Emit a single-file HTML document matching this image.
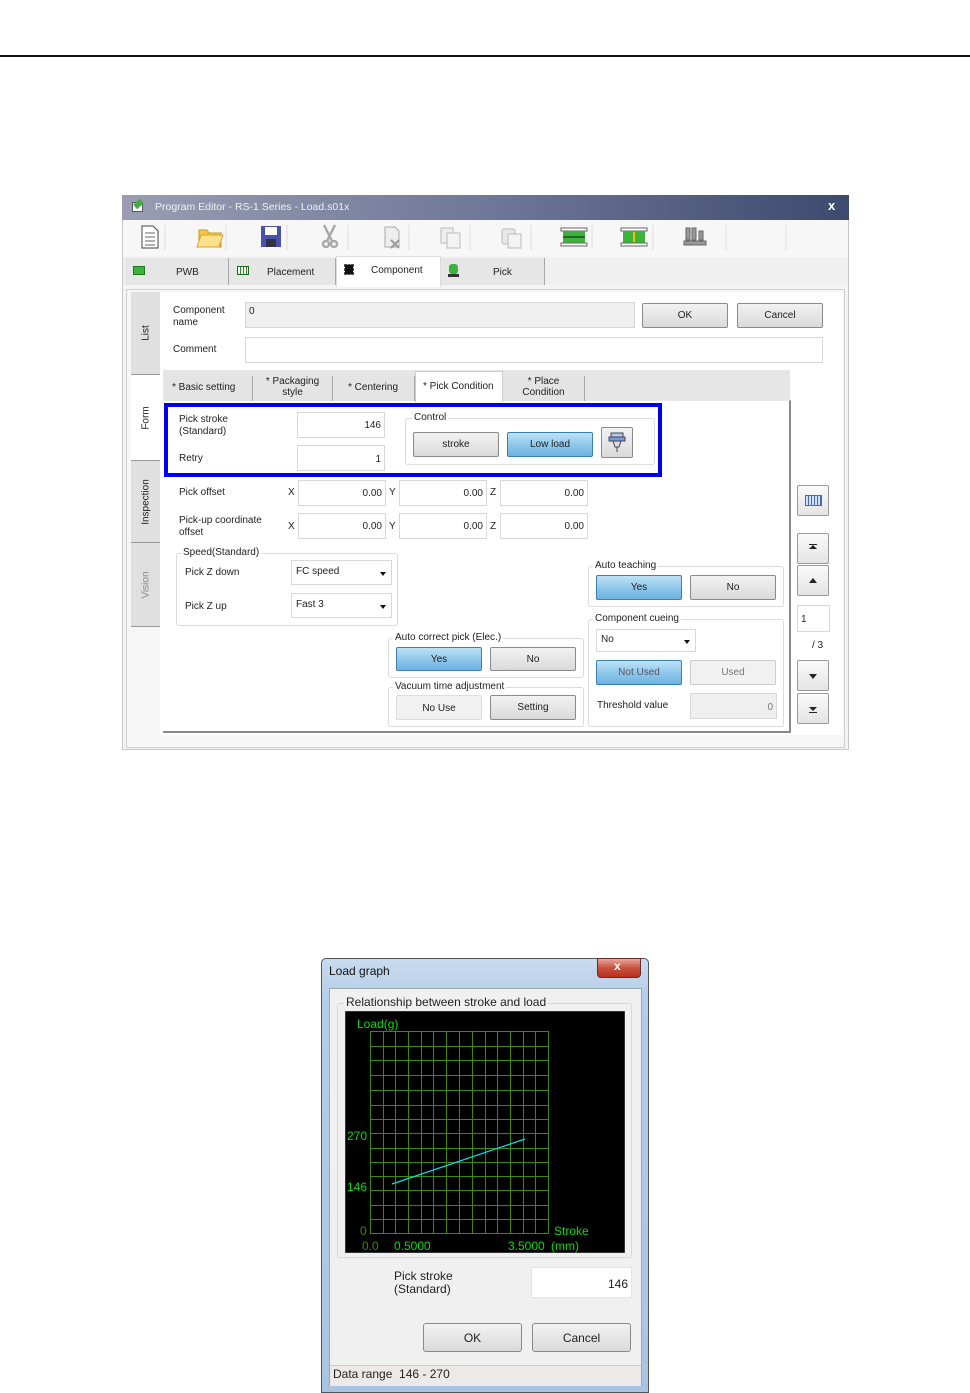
<!DOCTYPE html>
<html><head><meta charset="utf-8"><style>
*{margin:0;padding:0;box-sizing:border-box}
body{width:970px;height:1393px;background:#fff;position:relative;font-family:"Liberation Sans","DejaVu Sans",sans-serif;font-size:10px;color:#222;overflow:hidden}
.a{position:absolute}
.t{position:absolute;white-space:nowrap;line-height:1.15}
.inp{position:absolute;background:#fff;border:1px solid #d8d8d8;text-align:right;padding:0 3px;font-size:10px}
.btn{position:absolute;border:1px solid #8a8a8a;border-radius:2px;background:linear-gradient(#f2f2f2,#dadada);text-align:center;font-size:10px}
.bl{background:linear-gradient(#bfe2f8,#8cc6ea 55%,#6eb4e2);border-color:#3c7fb1}
.grp{position:absolute;border:1px solid #dcdcdc;border-radius:3px}
.gl{position:absolute;background:#fff;padding:0 2px;top:-7px;left:6px;font-size:10px;white-space:nowrap}
.sel{position:absolute;background:#fff;border:1px solid #d8d8d8;padding:0 4px;font-size:10px}
.sel:after{content:"";position:absolute;right:5px;top:50%;margin-top:-1px;border:3px solid transparent;border-top:4px solid #111}
.tab{position:absolute;background:#e4e4e4;border-right:1px solid #a8a8a8;font-size:10px;text-align:center;line-height:1.1}
.vt{position:absolute;background:#e0e0e0;border-bottom:1px solid #9a9a9a;font-size:10px}
.vt span{position:absolute;left:50%;top:50%;transform:translate(-50%,-50%) rotate(-90deg);white-space:nowrap}
.rb{position:absolute;width:32px;height:31px;border:1px solid #9a9a9a;border-radius:2px;background:linear-gradient(#fafafa,#e4e4e4)}
</style></head><body>
<div class="a" style="left:0;top:55px;width:970px;height:2px;background:#111"></div>

<!-- main window -->
<div class="a" style="left:122px;top:195px;width:727px;height:555px;background:#f4f4f4;border:1px solid #c8c8c8"></div>
<div class="a" style="left:122px;top:195px;width:727px;height:25px;background:linear-gradient(90deg,#9a9db2,#6f7898 50%,#3d4a6e)"></div>
<div class="a" style="left:132px;top:202px;width:11px;height:10px;border:1px solid #555;background:#fff"></div>
<div class="a" style="left:134px;top:201px;width:9px;height:6px;background:#4a4;transform:rotate(-40deg)"></div>
<div class="t" style="left:155px;top:201px;color:#f0f0f0;font-size:10.5px">Program Editor - RS-1 Series - Load.s01x</div>
<div class="t" style="left:828px;top:199px;color:#fff;font-weight:bold;font-size:13px">x</div>

<!-- toolbar -->
<div class="a" style="left:123px;top:220px;width:725px;height:37px;background:#f7f7f7"></div>
<svg class="a" style="left:123px;top:220px" width="725" height="40">
<g stroke="#ddd"><line x1="42" y1="5" x2="42" y2="30"/><line x1="103" y1="5" x2="103" y2="30"/><line x1="164" y1="5" x2="164" y2="30"/><line x1="225" y1="5" x2="225" y2="30"/><line x1="286" y1="5" x2="286" y2="30"/><line x1="347" y1="5" x2="347" y2="30"/><line x1="408" y1="5" x2="408" y2="30"/><line x1="469" y1="5" x2="469" y2="30"/><line x1="530" y1="5" x2="530" y2="30"/><line x1="603" y1="5" x2="603" y2="30"/><line x1="663" y1="5" x2="663" y2="30"/></g>
<path d="M19 6h11l5 5v17H19z" fill="#fff" stroke="#444"/><g stroke="#666"><line x1="22" y1="13" x2="32" y2="13"/><line x1="22" y1="17" x2="32" y2="17"/><line x1="22" y1="21" x2="32" y2="21"/><line x1="22" y1="25" x2="32" y2="25"/></g>
<path d="M76 10h8l2 3h12v14H76z" fill="#f3c64a" stroke="#c99a1c"/><path d="M78 15h22l-4 12H74z" fill="#fde08a" stroke="#d4a22a"/>
<rect x="138" y="6" width="20" height="21" fill="#4a52b0"/><rect x="142" y="7" width="12" height="8" fill="#fff"/><rect x="143" y="19" width="10" height="8" fill="#334"/>
<g stroke="#aaa" stroke-width="2.5" fill="none"><path d="M201 5l8 16M212 5l-8 16"/><circle cx="203" cy="24" r="3"/><circle cx="211" cy="24" r="3"/></g>
<path d="M262 7h10l4 4v16h-14z" fill="#eee" stroke="#aaa"/><path d="M268 20l8 8M276 20l-8 8" stroke="#999" stroke-width="2"/>
<rect x="318" y="8" width="12" height="15" fill="#eee" stroke="#bbb"/><rect x="324" y="13" width="13" height="15" fill="#f3f3f3" stroke="#bbb"/>
<rect x="379" y="9" width="13" height="15" rx="2" fill="#e8e8e8" stroke="#bbb"/><rect x="385" y="14" width="13" height="14" fill="#f3f3f3" stroke="#bbb"/>
<rect x="438" y="8" width="26" height="3" fill="#fff" stroke="#666"/><rect x="440" y="11" width="22" height="12" fill="#3cb43c"/><rect x="438" y="23" width="26" height="3" fill="#fff" stroke="#666"/><path d="M440 17h22" stroke="#111"/>
<rect x="498" y="8" width="26" height="3" fill="#fff" stroke="#666"/><rect x="500" y="11" width="22" height="12" fill="#3cb43c"/><rect x="498" y="23" width="26" height="3" fill="#fff" stroke="#666"/><path d="M511 12v10" stroke="#f5c000" stroke-width="2"/>
<g fill="#999" stroke="#666"><rect x="563" y="8" width="4" height="12"/><rect x="569" y="8" width="4" height="12"/><rect x="576" y="11" width="4" height="9"/><rect x="561" y="21" width="22" height="4"/></g>
</svg>

<!-- main tabs -->
<div class="a" style="left:123px;top:257px;width:725px;height:28px;background:#f0f0f0"></div>
<div class="tab" style="left:125px;top:258px;width:104px;height:27px;background:#e6e6e6"><div class="a" style="left:8px;top:8px;width:12px;height:9px;background:#3cb43c;border:1px solid #1a7a1a"></div><div class="t" style="left:51px;top:9px">PWB</div></div>
<div class="tab" style="left:229px;top:258px;width:107px;height:27px;background:#e6e6e6"><div class="a" style="left:8px;top:8px;width:12px;height:9px;border:1px solid #1a6a1a;background:repeating-linear-gradient(90deg,#fff 0 2px,#2a8a2a 2px 3px)"></div><div class="t" style="left:38px;top:9px">Placement</div></div>
<div class="a" style="left:336px;top:256px;width:105px;height:31px;background:#fff;border:1px solid #ddd;border-bottom:none"><div class="a" style="left:8px;top:8px;width:8px;height:9px;background:#111;outline:1px dashed #555"></div><div class="t" style="left:34px;top:8px">Component</div></div>
<div class="tab" style="left:441px;top:258px;width:104px;height:27px;background:#e6e6e6"><div class="a" style="left:8px;top:6px;width:9px;height:10px;background:#3cb43c;border-radius:3px"></div><div class="a" style="left:7px;top:16px;width:11px;height:3px;background:#333"></div><div class="t" style="left:52px;top:9px">Pick</div></div>

<!-- content -->
<div class="a" style="left:126px;top:289px;width:719px;height:459px;border:1px solid #d0d0d0;background:#f6f6f6"></div>
<div class="vt" style="left:131px;top:292px;width:29px;height:83px"><span>List</span></div>
<div class="a" style="left:131px;top:375px;width:30px;height:85px;background:#fff"><span class="t" style="left:50%;top:50%;transform:translate(-50%,-50%) rotate(-90deg)">Form</span></div>
<div class="vt" style="left:131px;top:460px;width:29px;height:83px;border-top:1px solid #9a9a9a"><span>Inspection</span></div>
<div class="vt" style="left:131px;top:543px;width:29px;height:84px;color:#888"><span>Vision</span></div>
<div class="a" style="left:160px;top:292px;width:683px;height:443px;background:#fff"></div>
<div class="a" style="left:163px;top:731px;width:628px;height:2px;background:#8a8a8a"></div>
<div class="a" style="left:789px;top:400px;width:2px;height:333px;background:#8a8a8a"></div>

<div class="t" style="left:173px;top:305px">Component<br>name</div>
<div class="inp" style="left:245px;top:302px;width:390px;height:26px;background:#efefef;text-align:left;padding-top:3px">0</div>
<div class="btn" style="left:642px;top:303px;width:86px;height:25px;line-height:23px">OK</div>
<div class="btn" style="left:737px;top:303px;width:86px;height:25px;line-height:23px">Cancel</div>
<div class="t" style="left:173px;top:344px">Comment</div>
<div class="inp" style="left:245px;top:337px;width:578px;height:26px"></div>

<!-- sub tabs -->
<div class="a" style="left:163px;top:370px;width:627px;height:31px;background:#e6e6e6"></div>
<div class="tab" style="left:166px;top:376px;width:87px;height:25px"><div class="t" style="left:6px;top:6px">* Basic setting</div></div>
<div class="tab" style="left:253px;top:376px;width:80px;height:25px;padding-top:0">* Packaging<br>style</div>
<div class="tab" style="left:333px;top:376px;width:82px;height:25px"><div class="t" style="left:15px;top:6px">* Centering</div></div>
<div class="a" style="left:415px;top:371px;width:88px;height:31px;background:#fff;border:1px solid #ccc;border-bottom:none"><div class="t" style="left:7px;top:9px">* Pick Condition</div></div>
<div class="tab" style="left:503px;top:376px;width:82px;height:25px">* Place<br>Condition</div>

<!-- blue box -->
<div class="a" style="left:164px;top:403px;width:498px;height:74px;border:4px solid #0000f0"></div>
<div class="t" style="left:179px;top:414px">Pick stroke<br>(Standard)</div>
<div class="inp" style="left:297px;top:412px;width:88px;height:26px;line-height:26px">146</div>
<div class="t" style="left:179px;top:453px">Retry</div>
<div class="inp" style="left:297px;top:445px;width:88px;height:26px;line-height:28px">1</div>
<div class="grp" style="left:405px;top:418px;width:250px;height:47px"><div class="gl">Control</div></div>
<div class="btn" style="left:413px;top:432px;width:86px;height:25px;line-height:24px">stroke</div>
<div class="btn bl" style="left:507px;top:432px;width:86px;height:25px;line-height:24px">Low load</div>
<div class="btn" style="left:601px;top:427px;width:32px;height:31px"><svg width="30" height="29"><rect x="9" y="5" width="12" height="4" fill="#b8c8e8" stroke="#445"/><rect x="7" y="9" width="16" height="4" fill="#7a9ad8" stroke="#445"/><path d="M11 13h8l-2 6h-4z" fill="#ddd" stroke="#445"/><path d="M15 19v5" stroke="#445"/></svg></div>

<div class="t" style="left:179px;top:487px">Pick offset</div>
<div class="t" style="left:179px;top:515px">Pick-up coordinate<br>offset</div>
<div class="t" style="left:288px;top:487px">X</div><div class="t" style="left:389px;top:487px">Y</div><div class="t" style="left:490px;top:487px">Z</div>
<div class="t" style="left:288px;top:521px">X</div><div class="t" style="left:389px;top:521px">Y</div><div class="t" style="left:490px;top:521px">Z</div>
<div class="inp" style="left:298px;top:480px;width:88px;height:26px;line-height:26px">0.00</div>
<div class="inp" style="left:399px;top:480px;width:88px;height:26px;line-height:26px">0.00</div>
<div class="inp" style="left:500px;top:480px;width:88px;height:26px;line-height:26px">0.00</div>
<div class="inp" style="left:298px;top:513px;width:88px;height:26px;line-height:26px">0.00</div>
<div class="inp" style="left:399px;top:513px;width:88px;height:26px;line-height:26px">0.00</div>
<div class="inp" style="left:500px;top:513px;width:88px;height:26px;line-height:26px">0.00</div>

<div class="grp" style="left:176px;top:553px;width:222px;height:73px"><div class="gl" style="left:4px">Speed(Standard)</div></div>
<div class="t" style="left:185px;top:567px">Pick Z down</div>
<div class="sel" style="left:291px;top:560px;width:101px;height:25px;line-height:22px">FC speed</div>
<div class="t" style="left:185px;top:601px">Pick Z up</div>
<div class="sel" style="left:291px;top:593px;width:101px;height:25px;line-height:22px">Fast 3</div>

<div class="grp" style="left:388px;top:638px;width:196px;height:40px"><div class="gl" style="left:4px">Auto correct pick (Elec.)</div></div>
<div class="btn bl" style="left:396px;top:647px;width:86px;height:24px;line-height:23px">Yes</div>
<div class="btn" style="left:490px;top:647px;width:86px;height:24px;line-height:23px">No</div>
<div class="grp" style="left:388px;top:687px;width:196px;height:40px"><div class="gl" style="left:4px">Vacuum time adjustment</div></div>
<div class="btn" style="left:396px;top:695px;width:86px;height:25px;line-height:25px;background:#f1f1f1;border-color:#ddd">No Use</div>
<div class="btn" style="left:490px;top:695px;width:86px;height:25px;line-height:23px">Setting</div>

<div class="grp" style="left:588px;top:566px;width:196px;height:41px"><div class="gl" style="left:4px">Auto teaching</div></div>
<div class="btn bl" style="left:596px;top:575px;width:86px;height:25px;line-height:24px">Yes</div>
<div class="btn" style="left:690px;top:575px;width:86px;height:25px;line-height:24px">No</div>
<div class="grp" style="left:588px;top:619px;width:196px;height:108px"><div class="gl" style="left:4px">Component cueing</div></div>
<div class="sel" style="left:596px;top:629px;width:100px;height:23px;line-height:20px">No</div>
<div class="btn bl" style="left:596px;top:660px;width:86px;height:25px;line-height:24px;color:#556">Not Used</div>
<div class="btn" style="left:690px;top:660px;width:86px;height:25px;line-height:24px;background:#f1f1f1;border-color:#ccc;color:#777">Used</div>
<div class="t" style="left:597px;top:700px">Threshold value</div>
<div class="inp" style="left:690px;top:693px;width:87px;height:26px;line-height:28px;background:#efefef;color:#777">0</div>

<!-- right controls -->
<div class="rb" style="left:797px;top:485px"><div class="a" style="left:7px;top:9px;width:17px;height:11px;border:1px solid #4a6ab8;background:repeating-linear-gradient(90deg,#cfe0f8 0 2px,#4a6ab8 2px 3px)"></div></div>
<div class="rb" style="left:797px;top:533px"><div class="a" style="left:11px;top:10px;width:8px;height:1px;background:#222"></div><div class="a" style="left:11px;top:11px;border:4px solid transparent;border-bottom:4px solid #222;border-top:none"></div></div>
<div class="rb" style="left:797px;top:565px"><div class="a" style="left:11px;top:12px;border:4px solid transparent;border-bottom:5px solid #222;border-top:none"></div></div>
<div class="inp" style="left:797px;top:605px;width:33px;height:27px;text-align:left;line-height:27px">1</div>
<div class="t" style="left:812px;top:640px">/ 3</div>
<div class="rb" style="left:797px;top:660px"><div class="a" style="left:11px;top:13px;border:4px solid transparent;border-top:5px solid #222;border-bottom:none"></div></div>
<div class="rb" style="left:797px;top:693px"><div class="a" style="left:11px;top:13px;border:4px solid transparent;border-top:4px solid #222;border-bottom:none"></div><div class="a" style="left:11px;top:18px;width:8px;height:1px;background:#222"></div></div>

<!-- Load graph dialog -->
<div class="a" style="left:321px;top:958px;width:328px;height:435px;background:linear-gradient(#c9dcef,#b4cde8 40px,#a9c4e2);border:1px solid #555;border-radius:5px 5px 0 0"></div>
<div class="t" style="left:329px;top:965px;font-size:12px;color:#111">Load graph</div>
<div class="a" style="left:597px;top:958px;width:44px;height:20px;border:1px solid #6a2a2a;border-radius:0 0 4px 4px;background:linear-gradient(#e8a89a,#c8503c 50%,#b83020)"><div class="t" style="left:16px;top:1px;color:#fff;font-weight:bold;font-size:12px">x</div></div>
<div class="a" style="left:329px;top:988px;width:313px;height:398px;background:#f0f0f0;border:1px solid #9aa"></div>
<div class="grp" style="left:337px;top:1003px;width:295px;height:255px;border-color:#d8d8d8"><div class="gl" style="background:#f0f0f0;left:6px;font-size:12px;top:-9px">Relationship between stroke and load</div></div>
<svg class="a" style="left:345px;top:1011px" width="280" height="242">
<rect width="280" height="242" fill="#000" stroke="#666"/>
<g stroke="#3f8a00" stroke-width="1">
<line x1="25.5" y1="20" x2="25.5" y2="222"/><line x1="38.5" y1="20" x2="38.5" y2="222"/><line x1="50.5" y1="20" x2="50.5" y2="222"/><line x1="63.5" y1="20" x2="63.5" y2="222"/><line x1="76.5" y1="20" x2="76.5" y2="222"/><line x1="88.5" y1="20" x2="88.5" y2="222"/><line x1="101.5" y1="20" x2="101.5" y2="222"/><line x1="114.5" y1="20" x2="114.5" y2="222"/><line x1="127.5" y1="20" x2="127.5" y2="222"/><line x1="140.5" y1="20" x2="140.5" y2="222"/><line x1="152.5" y1="20" x2="152.5" y2="222"/><line x1="165.5" y1="20" x2="165.5" y2="222"/><line x1="178.5" y1="20" x2="178.5" y2="222"/><line x1="190.5" y1="20" x2="190.5" y2="222"/><line x1="203.5" y1="20" x2="203.5" y2="222"/>
<line x1="25" y1="20.5" x2="204" y2="20.5"/><line x1="25" y1="35.5" x2="204" y2="35.5"/><line x1="25" y1="49.5" x2="204" y2="49.5"/><line x1="25" y1="64.5" x2="204" y2="64.5"/><line x1="25" y1="79.5" x2="204" y2="79.5"/><line x1="25" y1="94.5" x2="204" y2="94.5"/><line x1="25" y1="108.5" x2="204" y2="108.5"/><line x1="25" y1="122.5" x2="204" y2="122.5"/><line x1="25" y1="137.5" x2="204" y2="137.5"/><line x1="25" y1="151.5" x2="204" y2="151.5"/><line x1="25" y1="165.5" x2="204" y2="165.5"/><line x1="25" y1="179.5" x2="204" y2="179.5"/><line x1="25" y1="194.5" x2="204" y2="194.5"/><line x1="25" y1="208.5" x2="204" y2="208.5"/><line x1="25" y1="222.5" x2="204" y2="222.5"/>
</g>
<line x1="47" y1="173" x2="180" y2="128" stroke="#00e0f0" stroke-width="1.2"/>
<g font-family="Liberation Sans,sans-serif" font-size="12" fill="#00e000">
<text x="12" y="17">Load(g)</text><text x="2" y="129">270</text><text x="2" y="180">146</text>
<text x="15" y="224" fill="#3f8a00">0</text><text x="209" y="224">Stroke</text>
<text x="17" y="239" fill="#3f8a00">0.0</text><text x="49" y="239">0.5000</text><text x="163" y="239">3.5000</text><text x="206" y="239">(mm)</text>
</g></svg>
<div class="t" style="left:394px;top:1270px;font-size:12px;line-height:1.1">Pick stroke<br>(Standard)</div>
<div class="inp" style="left:531px;top:1267px;width:101px;height:31px;line-height:33px;font-size:12px;border-color:#e4e4e4">146</div>
<div class="btn" style="left:423px;top:1323px;width:99px;height:29px;line-height:28px;font-size:12px;border-radius:3px">OK</div>
<div class="btn" style="left:532px;top:1323px;width:99px;height:29px;line-height:28px;font-size:12px;border-radius:3px">Cancel</div>
<div class="a" style="left:330px;top:1365px;width:311px;height:21px;background:#ece9e8;border-top:1px solid #ccc"></div>
<div class="t" style="left:333px;top:1368px;font-size:12px">Data range&nbsp; 146 - 270</div>
</body></html>
